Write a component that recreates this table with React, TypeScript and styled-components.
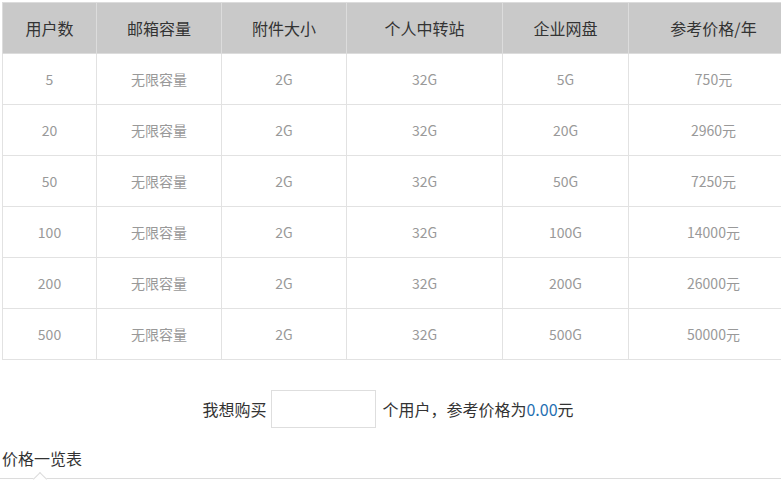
import React from "react";
import styled, { createGlobalStyle } from "styled-components";

const Global = createGlobalStyle`
  html, body { margin: 0; padding: 0; background: #fff; overflow: hidden; }
  body { font-family: "Microsoft YaHei", "Noto Sans CJK SC", "Noto Sans", sans-serif; }
`;

const Page = styled.div`
  width: 781px;
  height: 481px;
  overflow: hidden;
  padding: 2px 0 0 2px;
  box-sizing: border-box;
`;

const Table = styled.table`
  border-collapse: collapse;
  table-layout: fixed;
  width: 796px;
`;

const Th = styled.th<{ w: number }>`
  width: ${(p) => p.w}px;
  height: 50px;
  padding: 0;
  background: #c9c9c9;
  color: #333;
  font-size: 16px;
  font-weight: normal;
  border: 1px solid #dcdcdc;
  text-align: center;
  white-space: nowrap;
`;

const Td = styled.td`
  height: 50px;
  padding: 0;
  color: #999;
  font-size: 14px;
  border: 1px solid #e2e2e2;
  text-align: center;
`;

const BuyRow = styled.div`
  width: 772px;
  margin-top: 30px;
  display: flex;
  align-items: center;
  justify-content: center;
  font-size: 16px;
  color: #333;
`;

const Qty = styled.input`
  width: 105px;
  height: 38px;
  box-sizing: border-box;
  margin: 0 6px 0 5px;
  border: 1px solid #dedede;
  outline: none;
  font-size: 14px;
`;

const Price = styled.span`
  color: #1f6fb2;
`;

const TitleBar = styled.div`
  position: relative;
  margin: 15px 0 0 -2px;
  padding: 0 0 0 2px;
  height: 36px;
  width: 783px;
  border-bottom: 1px solid #dcdcdc;
  font-size: 16px;
  color: #333;
  line-height: 30px;
  box-sizing: border-box;
  &::after {
    content: "";
    position: absolute;
    left: 35px;
    bottom: -6px;
    width: 9px;
    height: 9px;
    background: #fff;
    border-left: 1px solid #dcdcdc;
    border-top: 1px solid #dcdcdc;
    transform: rotate(45deg);
  }
`;

const cols = [
  { t: "用户数", w: 93 },
  { t: "邮箱容量", w: 124 },
  { t: "附件大小", w: 124 },
  { t: "个人中转站", w: 155 },
  { t: "企业网盘", w: 125 },
  { t: "参考价格/年", w: 169 },
];

const rows = [
  ["5", "无限容量", "2G", "32G", "5G", "750元"],
  ["20", "无限容量", "2G", "32G", "20G", "2960元"],
  ["50", "无限容量", "2G", "32G", "50G", "7250元"],
  ["100", "无限容量", "2G", "32G", "100G", "14000元"],
  ["200", "无限容量", "2G", "32G", "200G", "26000元"],
  ["500", "无限容量", "2G", "32G", "500G", "50000元"],
];

export default function App() {
  return (
    <Page>
      <Global />
      <Table>
        <thead>
          <tr>
            {cols.map((c) => (
              <Th key={c.t} w={c.w}>
                {c.t}
              </Th>
            ))}
          </tr>
        </thead>
        <tbody>
          {rows.map((r) => (
            <tr key={r[0]}>
              {r.map((v, i) => (
                <Td key={i}>{v}</Td>
              ))}
            </tr>
          ))}
        </tbody>
      </Table>
      <BuyRow>
        我想购买
        <Qty type="text" />
        个用户，参考价格为<Price>0.00</Price>元
      </BuyRow>
      <TitleBar>价格一览表</TitleBar>
    </Page>
  );
}
